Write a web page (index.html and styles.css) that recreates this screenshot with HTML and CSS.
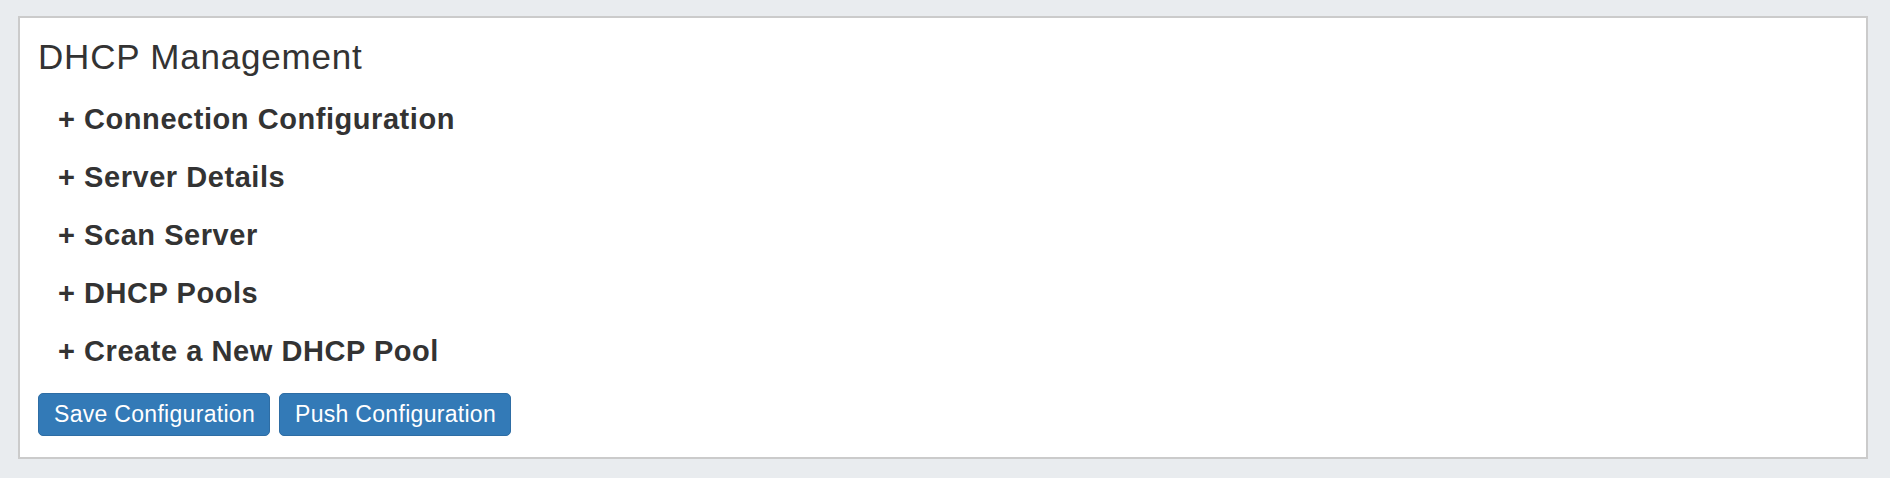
FILE: index.html
```html
<!DOCTYPE html>
<html lang="en">
<head>
  <meta charset="UTF-8">
  <title>DHCP Management</title>
  <link rel="stylesheet" href="styles.css">
</head>
<body>
<div class="panel">
  <h3 class="panel-title">DHCP Management</h3>

  <div class="sections">
    <h4 class="section-toggle">+ Connection Configuration</h4>
    <h4 class="section-toggle">+ Server Details</h4>
    <h4 class="section-toggle">+ Scan Server</h4>
    <h4 class="section-toggle">+ DHCP Pools</h4>
    <h4 class="section-toggle">+ Create a New DHCP Pool</h4>
  </div>

  <div class="actions">
    <button class="btn btn-primary">Save Configuration</button>
    <button class="btn btn-primary">Push Configuration</button>
  </div>
</div>
</body>
</html>
```

FILE: styles.css
```css
body {
  margin: 0;
  background: #e9ecef;
  font-family: "Liberation Sans", Arial, Helvetica, sans-serif;
  color: #333;
}
.panel {
  margin: 16px 22px 20px 18px;
  padding: 20px 18px 21px;
  background: #fff;
  border: 2px solid #cbcbcb;
}
.panel-title {
  margin: 0;
  font-size: 35px;
  line-height: 38px;
  font-weight: normal;
  letter-spacing: 0.8px;
}
.sections {
  display: flex;
  flex-direction: column;
  gap: 26px;
  margin: 27px 0 26px 20px;
}
.section-toggle {
  margin: 0;
  font-size: 29px;
  line-height: 32px;
  font-weight: bold;
  letter-spacing: 0.55px;
  cursor: pointer;
}
.actions {
  display: flex;
  gap: 9px;
}
.btn {
  font-family: inherit;
  font-size: 23px;
  line-height: 27px;
  padding: 7px 14px 7px 15px;
  border-radius: 5px;
  border: 1px solid transparent;
  letter-spacing: 0.3px;
  cursor: pointer;
}
.btn-primary {
  background: #337ab7;
  border-color: #2e6da4;
  color: #fff;
}
```
